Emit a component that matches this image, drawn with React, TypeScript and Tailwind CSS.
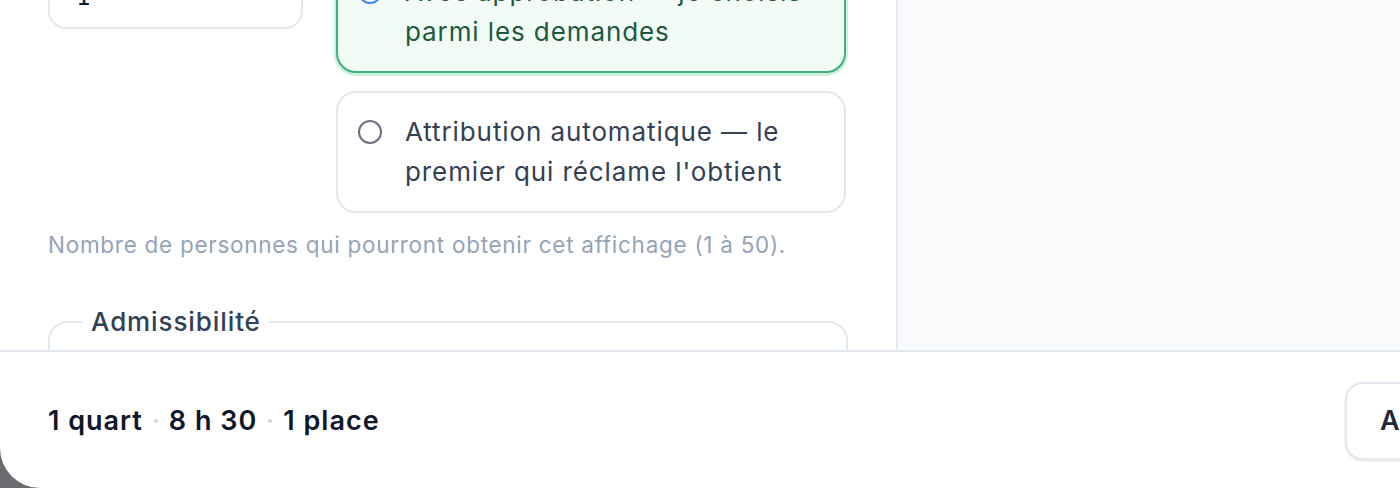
export default function App() {
  return (
    <div
      className="h-[488px] w-[1400px] overflow-hidden bg-[#6b6b70]"
      style={{ fontFamily: 'Inter, "Noto Sans", sans-serif' }}
    >
      <div className="flex h-[488px] w-[1849px] flex-col overflow-hidden rounded-bl-[40px] bg-white">
        {/* Body */}
        <div className="flex h-[350px] shrink-0">
          <div className="w-[896px] shrink-0 overflow-hidden px-12">
            <div className="-mt-[49px]">
              <div className="grid grid-cols-[255px_510px] items-start gap-x-[33px]">
                {/* Places input */}
                <div className="flex h-[78px] items-center rounded-[18px] border-2 border-[#e2e8f0] bg-white pl-[26px] pt-[14px] text-[24px] text-[#0f172a]">
                  <span style={{ fontFamily: '"DejaVu Sans Mono", monospace' }}>1</span>
                </div>

                {/* Assignment mode */}
                <div className="flex flex-col gap-[18px]">
                  <label className="flex items-start gap-[23px] rounded-[20px] border-2 border-[#3fb07e] bg-[#f2fbf6] px-[20px] py-[19px] shadow-[0_1px_0_2px_#cdeedc]">
                    <span className="mt-[8px] flex h-[24px] w-[24px] shrink-0 items-center justify-center rounded-full border-2 border-[#3b82f6] bg-white">
                      <span className="h-[12px] w-[12px] rounded-full bg-[#3b82f6]" />
                    </span>
                    <span className="text-[26px] leading-[40px] tracking-[0.9px] text-[#1b5a3d]">
                      Avec approbation — je choisis
                      <br />
                      parmi les demandes
                    </span>
                  </label>
                  <label className="flex items-start gap-[23px] rounded-[20px] border-2 border-[#e2e8f0] bg-white px-[20px] py-[19px]">
                    <span className="mt-[8px] h-[24px] w-[24px] shrink-0 rounded-full border-2 border-[#6b7280] bg-white" />
                    <span className="text-[26px] leading-[40px] tracking-[0.9px] text-[#334155]">
                      Attribution automatique — le
                      <br />
                      premier qui réclame l'obtient
                    </span>
                  </label>
                </div>
              </div>

              <p className="mt-4 text-[22.5px] leading-[32px] tracking-[0.72px] text-[#94a3b8]">
                Nombre de personnes qui pourront obtenir cet affichage (1 à 50).
              </p>

              <fieldset className="mt-[43px] rounded-[20px] border-2 border-[#e2e8f0] px-[33px] pb-6">
                <legend className="px-2 text-[26px] font-medium leading-[36px] tracking-[0.9px] text-[#334155]">
                  Admissibilité
                </legend>
                <div className="h-[120px]" />
              </fieldset>
            </div>
          </div>

          {/* Preview panel */}
          <div className="flex-1 border-l-2 border-[#e6eaf5] bg-[#f8fafc]" />
        </div>

        {/* Footer */}
        <footer className="flex h-[138px] shrink-0 items-center justify-between border-t-2 border-[#e2e8f0] px-12 pt-[2px]">
          <div className="flex items-center gap-[11px] text-[27px] font-semibold tracking-[1px] text-[#0f172a]">
            <span>1 quart</span>
            <span className="h-[4px] w-[4px] rounded-full bg-[#cbd5e1]" />
            <span>8 h 30</span>
            <span className="h-[4px] w-[4px] rounded-full bg-[#cbd5e1]" />
            <span>1 place</span>
          </div>
          <div className="flex items-center gap-4">
            <button className="h-[78px] w-[180px] rounded-[18px] border-2 border-[#e2e8f0] bg-white pl-[33px] text-left text-[27px] font-semibold tracking-[0.8px] text-[#1e293b] shadow-sm">
              Annuler
            </button>
            <button className="h-[78px] w-[260px] rounded-[18px] bg-[#16a34a] text-[27px] font-semibold text-white">
              Publier
            </button>
          </div>
        </footer>
      </div>
    </div>
  )
}
